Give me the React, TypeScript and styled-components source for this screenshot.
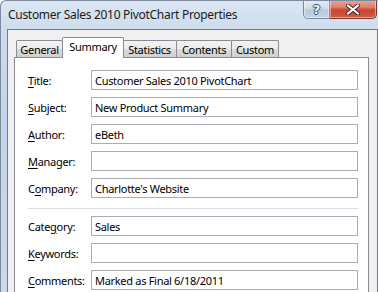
import React from "react";
import styled, { createGlobalStyle } from "styled-components";

const GlobalStyle = createGlobalStyle`
  html, body {
    margin: 0;
    padding: 0;
    width: 378px;
    height: 292px;
    overflow: hidden;
    background: #ffffff;
  }
  * { box-sizing: border-box; }
`;

const FONT = `"Noto Sans", "Open Sans", sans-serif`;

const Window = styled.div`
  width: 378px;
  height: 292px;
  display: flex;
  flex-direction: column;
  background: linear-gradient(180deg, #dbe6f2 0px, #cddcec 30px, #c3d4e8 120px, #cbd9ea 292px);
  border-left: 1px solid #7d8ba0;
  border-top: 1px solid #7d8ba0;
  border-top-left-radius: 6px;
  font-family: ${FONT};
  overflow: hidden;
`;

const TitleBar = styled.div`
  height: 28px;
  display: flex;
  align-items: flex-start;
  flex-shrink: 0;
`;

const TitleText = styled.div`
  flex: 1;
  padding: 5px 0 0 7px;
  font-size: 12px;
  color: #1b1b1b;
  white-space: nowrap;
  letter-spacing: -0.3px;
`;

const CaptionButtons = styled.div`
  display: flex;
  margin-top: -1px;
  margin-right: 1px;
`;

const CaptionButton = styled.div<{ $close?: boolean }>`
  height: 19px;
  width: ${(p) => (p.$close ? "47px" : "27px")};
  display: flex;
  align-items: center;
  justify-content: center;
  border: 1px solid ${(p) => (p.$close ? "#7a3a33" : "#7b8aa0")};
  border-top: none;
  border-left-width: ${(p) => (p.$close ? "0" : "1px")};
  border-radius: ${(p) => (p.$close ? "0 0 5px 0" : "0 0 0 5px")};
  background: ${(p) =>
    p.$close
      ? "linear-gradient(180deg, #e9a99c 0%, #dd7f6d 40%, #c8452f 55%, #cf5a43 100%)"
      : "linear-gradient(180deg, #e5ecf4 0%, #d2dde9 45%, #b9c9db 55%, #c6d4e4 100%)"};
  box-shadow: inset 0 0 0 1px rgba(255, 255, 255, 0.45);
`;

const HelpGlyph = styled.span`
  font-family: "DejaVu Sans", sans-serif;
  font-weight: bold;
  font-size: 13px;
  line-height: 1;
  color: #f4f7fb;
  text-shadow: -1px 0 #3d4b5e, 1px 0 #3d4b5e, 0 -1px #3d4b5e, 0 1px #3d4b5e;
`;

const Client = styled.div`
  flex: 1;
  margin-left: 6px;
  background: #f0f0f0;
  border: 1px solid #6b7b93;
  border-bottom: none;
  padding: 7px 8px 0 6px;
  display: flex;
  flex-direction: column;
`;

const TabRow = styled.div`
  display: flex;
  align-items: flex-end;
  padding-left: 2px;
  margin-bottom: -1px;
  position: relative;
  z-index: 1;
`;

const Tab = styled.div<{ $active?: boolean; $w: number }>`
  width: ${(p) => p.$w}px;
  height: ${(p) => (p.$active ? "21px" : "17px")};
  margin-bottom: ${(p) => (p.$active ? "0" : "1px")};
  margin-left: -1px;
  margin-right: ${(p) => (p.$active ? "-1px" : "0")};
  position: relative;
  z-index: ${(p) => (p.$active ? 2 : 1)};
  border: 1px solid #898c95;
  border-bottom: none;
  border-radius: 2px 2px 0 0;
  background: ${(p) =>
    p.$active
      ? "#ffffff"
      : "linear-gradient(180deg, #f3f3f3 0%, #ebebeb 50%, #dddddd 51%, #cfcfcf 100%)"};
  font-size: 11px;
  letter-spacing: -0.3px;
  color: #000;
  display: flex;
  align-items: ${(p) => (p.$active ? "flex-start" : "center")};
  justify-content: center;
  padding-top: ${(p) => (p.$active ? "1px" : "0")};
  white-space: nowrap;
  &:first-child { margin-left: 0; }
`;

const Panel = styled.div`
  flex: 1;
  background: #ffffff;
  border: 1px solid #898c95;
  border-bottom: none;
  padding: 12px 10px 0 13px;
  display: flex;
  flex-direction: column;
`;

const Row = styled.div`
  display: grid;
  grid-template-columns: 63px 1fr;
  align-items: center;
  height: 20px;
  margin-bottom: 7px;
`;

const Label = styled.label`
  font-size: 11px;
  letter-spacing: -0.3px;
  color: #000;
  white-space: nowrap;
  u { text-decoration: underline; text-underline-offset: 2px; }
`;

const Field = styled.div`
  height: 20px;
  border: 1px solid #abadb3;
  background: #fff;
  font-size: 11px;
  letter-spacing: -0.3px;
  color: #000;
  padding: 0 3px;
  display: flex;
  align-items: center;
  white-space: nowrap;
  overflow: hidden;
`;

const Separator = styled.div`
  height: 1px;
  background: #d5dfe5;
  margin: 3px 0 7px 0;
`;

const XIcon = () => (
  <svg width="14" height="11" viewBox="0 0 14 11">
    <path d="M2 1.5 L12 9.5 M12 1.5 L2 9.5" stroke="#4a2420" strokeWidth="4" strokeLinecap="square" />
    <path d="M2 1.5 L12 9.5 M12 1.5 L2 9.5" stroke="#ffffff" strokeWidth="2" strokeLinecap="square" />
  </svg>
);

type Item = { label: string; key: number; value: string };

const renderLabel = (label: string, key: number) => (
  <>
    {label.slice(0, key)}
    <u>{label[key]}</u>
    {label.slice(key + 1)}
  </>
);

const top: Item[] = [
  { label: "Title:", key: 0, value: "Customer Sales 2010 PivotChart" },
  { label: "Subject:", key: 0, value: "New Product Summary" },
  { label: "Author:", key: 0, value: "eBeth" },
  { label: "Manager:", key: 0, value: "" },
  { label: "Company:", key: 1, value: "Charlotte's Website" },
];

const bottom: Item[] = [
  { label: "Category:", key: 4, value: "Sales" },
  { label: "Keywords:", key: 0, value: "" },
  { label: "Comments:", key: 0, value: "Marked as Final 6/18/2011" },
];

const tabs = [
  { name: "General", w: 47 },
  { name: "Summary", w: 62, active: true },
  { name: "Statistics", w: 55 },
  { name: "Contents", w: 56 },
  { name: "Custom", w: 48 },
];

export default function App() {
  return (
    <>
      <GlobalStyle />
      <Window>
        <TitleBar>
          <TitleText>Customer Sales 2010 PivotChart Properties</TitleText>
          <CaptionButtons>
            <CaptionButton>
              <HelpGlyph>?</HelpGlyph>
            </CaptionButton>
            <CaptionButton $close>
              <XIcon />
            </CaptionButton>
          </CaptionButtons>
        </TitleBar>
        <Client>
          <TabRow>
            {tabs.map((t) => (
              <Tab key={t.name} $w={t.w} $active={t.active}>
                {t.name}
              </Tab>
            ))}
          </TabRow>
          <Panel>
            {top.map((it) => (
              <Row key={it.label}>
                <Label>{renderLabel(it.label, it.key)}</Label>
                <Field>{it.value}</Field>
              </Row>
            ))}
            <Separator />
            {bottom.map((it) => (
              <Row key={it.label}>
                <Label>{renderLabel(it.label, it.key)}</Label>
                <Field>{it.value}</Field>
              </Row>
            ))}
          </Panel>
        </Client>
      </Window>
    </>
  );
}
